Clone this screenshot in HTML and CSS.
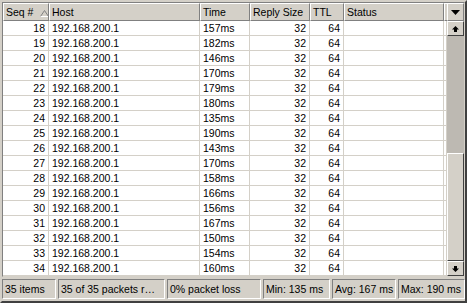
FILE: index.html
```html
<!DOCTYPE html>
<html lang="en">
<head>
    <meta charset="UTF-8">
    <title>Ping Results</title>
    <link rel="stylesheet" href="styles.css">
</head>
<body>

<div class="window">
    <div class="list">
        <div class="grid">
            <div class="row head">
                <div class="cell seq">Seq # <svg class="sort" width="9" height="7" viewBox="0 0 9 7"><polygon points="4.5,0.5 8.5,6.5 0.5,6.5" fill="none" stroke="#808080"/><line x1="8.5" y1="6.5" x2="0.5" y2="6.5" stroke="#fff"/></svg></div>
                <div class="cell host">Host</div>
                <div class="cell time">Time</div>
                <div class="cell size">Reply Size</div>
                <div class="cell ttl">TTL</div>
                <div class="cell status">Status</div>
                <div class="cell filler"></div>
            </div>
            <div id="rows"></div>
        </div>
        <div class="scroll">
            <div class="btn corner">
                <svg width="9" height="5" viewBox="0 0 9 5"><polygon points="0,0 9,0 4.5,5" fill="#000"/></svg>
            </div>
            <div class="btn arrow">
                <svg width="7" height="6" viewBox="0 0 7 6"><polygon points="3.5,0 7,3.5 5,3.5 5,6 2,6 2,3.5 0,3.5" fill="#000"/></svg>
            </div>
            <div class="track">
                <div class="thumb"></div>
            </div>
            <div class="btn arrow">
                <svg width="7" height="6" viewBox="0 0 7 6"><polygon points="2,0 5,0 5,2.5 7,2.5 3.5,6 0,2.5 2,2.5" fill="#000"/></svg>
            </div>
        </div>
    </div>
    <div class="statusbar">
        <div class="panel p1">35 items</div>
        <div class="panel p2">35 of 35 packets r…</div>
        <div class="panel p3">0% packet loss</div>
        <div class="panel p4">Min: 135 ms</div>
        <div class="panel p5">Avg: 167 ms</div>
        <div class="panel p6">Max: 190 ms</div>
    </div>
</div>

<script>
    const times = [157, 182, 146, 170, 179, 180, 135, 190, 143, 170, 158, 166, 156, 167, 150, 154, 160];
    const rows = document.getElementById('rows');
    times.forEach((t, i) => {
        const row = document.createElement('div');
        row.className = 'row';
        row.innerHTML =
            '<div class="cell seq">' + (18 + i) + '</div>' +
            '<div class="cell host">192.168.200.1</div>' +
            '<div class="cell time">' + t + 'ms</div>' +
            '<div class="cell size">32</div>' +
            '<div class="cell ttl">64</div>' +
            '<div class="cell status"></div>' +
            '<div class="cell filler"></div>';
        rows.appendChild(row);
    });
</script>

</body>
</html>
```

FILE: styles.css
```css
* {
    box-sizing: border-box;
    margin: 0;
    padding: 0;
}
body {
    width: 467px;
    height: 303px;
    overflow: hidden;
    font-family: 'Liberation Sans', Arial, sans-serif;
    font-size: 10.5px;
    color: #000;
    background-color: #d4d0c8;
}
.window {
    width: 467px;
    height: 303px;
    border: 2px solid;
    border-color: #d4d0c8 #404040 #404040 #d4d0c8;
    display: flex;
    flex-direction: column;
}
.list {
    display: flex;
    height: 275px;
    border: 1px solid;
    border-color: #808080 #d4d0c8 #d4d0c8 #808080;
    background-color: #fff;
}
.grid {
    width: 444px;
}
.row {
    display: grid;
    grid-template-columns: 46px 151px 50px 60px 34px 100px 3px;
    height: 15px;
}
.cell {
    border-right: 1px solid #d4d0c8;
    border-bottom: 1px solid #d4d0c8;
    line-height: 14px;
    padding: 0 3px;
    white-space: nowrap;
    overflow: hidden;
}
.seq, .size, .ttl {
    text-align: right;
}
.head {
    height: 18px;
}
.head .cell {
    background-color: #d4d0c8;
    text-align: left;
    line-height: 16px;
    border-top: 1px solid #fff;
    border-left: 1px solid #fff;
    border-right: 1px solid #808080;
    border-bottom: 1px solid #808080;
    padding: 0 2px;
}
.sort {
    margin-left: 4px;
    vertical-align: -1px;
}
.head .filler {
    border-right: none;
    padding: 0;
}
.row .filler {
    padding: 0;
}
.scroll {
    width: 17px;
    display: flex;
    flex-direction: column;
    background-color: #d4d0c8;
}
.btn {
    display: flex;
    align-items: center;
    justify-content: center;
    background-color: #d4d0c8;
    border: 1px solid;
    border-color: #fff #404040 #404040 #fff;
    height: 15px;
}
.corner {
    height: 18px;
    border-color: #fff #808080 #808080 #fff;
}
.track {
    flex: 1;
    display: flex;
    flex-direction: column;
    padding-top: 117px;
    background-color: #bdb9b2;
}
.thumb {
    flex: 1;
    background-color: #d4d0c8;
    border: 1px solid;
    border-color: #fff #404040 #404040 #fff;
}
.statusbar {
    display: flex;
    gap: 2px;
    padding-top: 2px;
    height: 24px;
}
.panel {
    height: 20px;
    line-height: 18px;
    padding: 0 2px;
    border: 1px solid;
    border-color: #808080 #fff #fff #808080;
    white-space: nowrap;
    overflow: hidden;
}
.p1 { width: 54px; }
.p2 { width: 107px; }
.p3 { width: 94px; }
.p4 { width: 67px; }
.p5 { width: 64px; }
.p6 { flex: 1; }
```
